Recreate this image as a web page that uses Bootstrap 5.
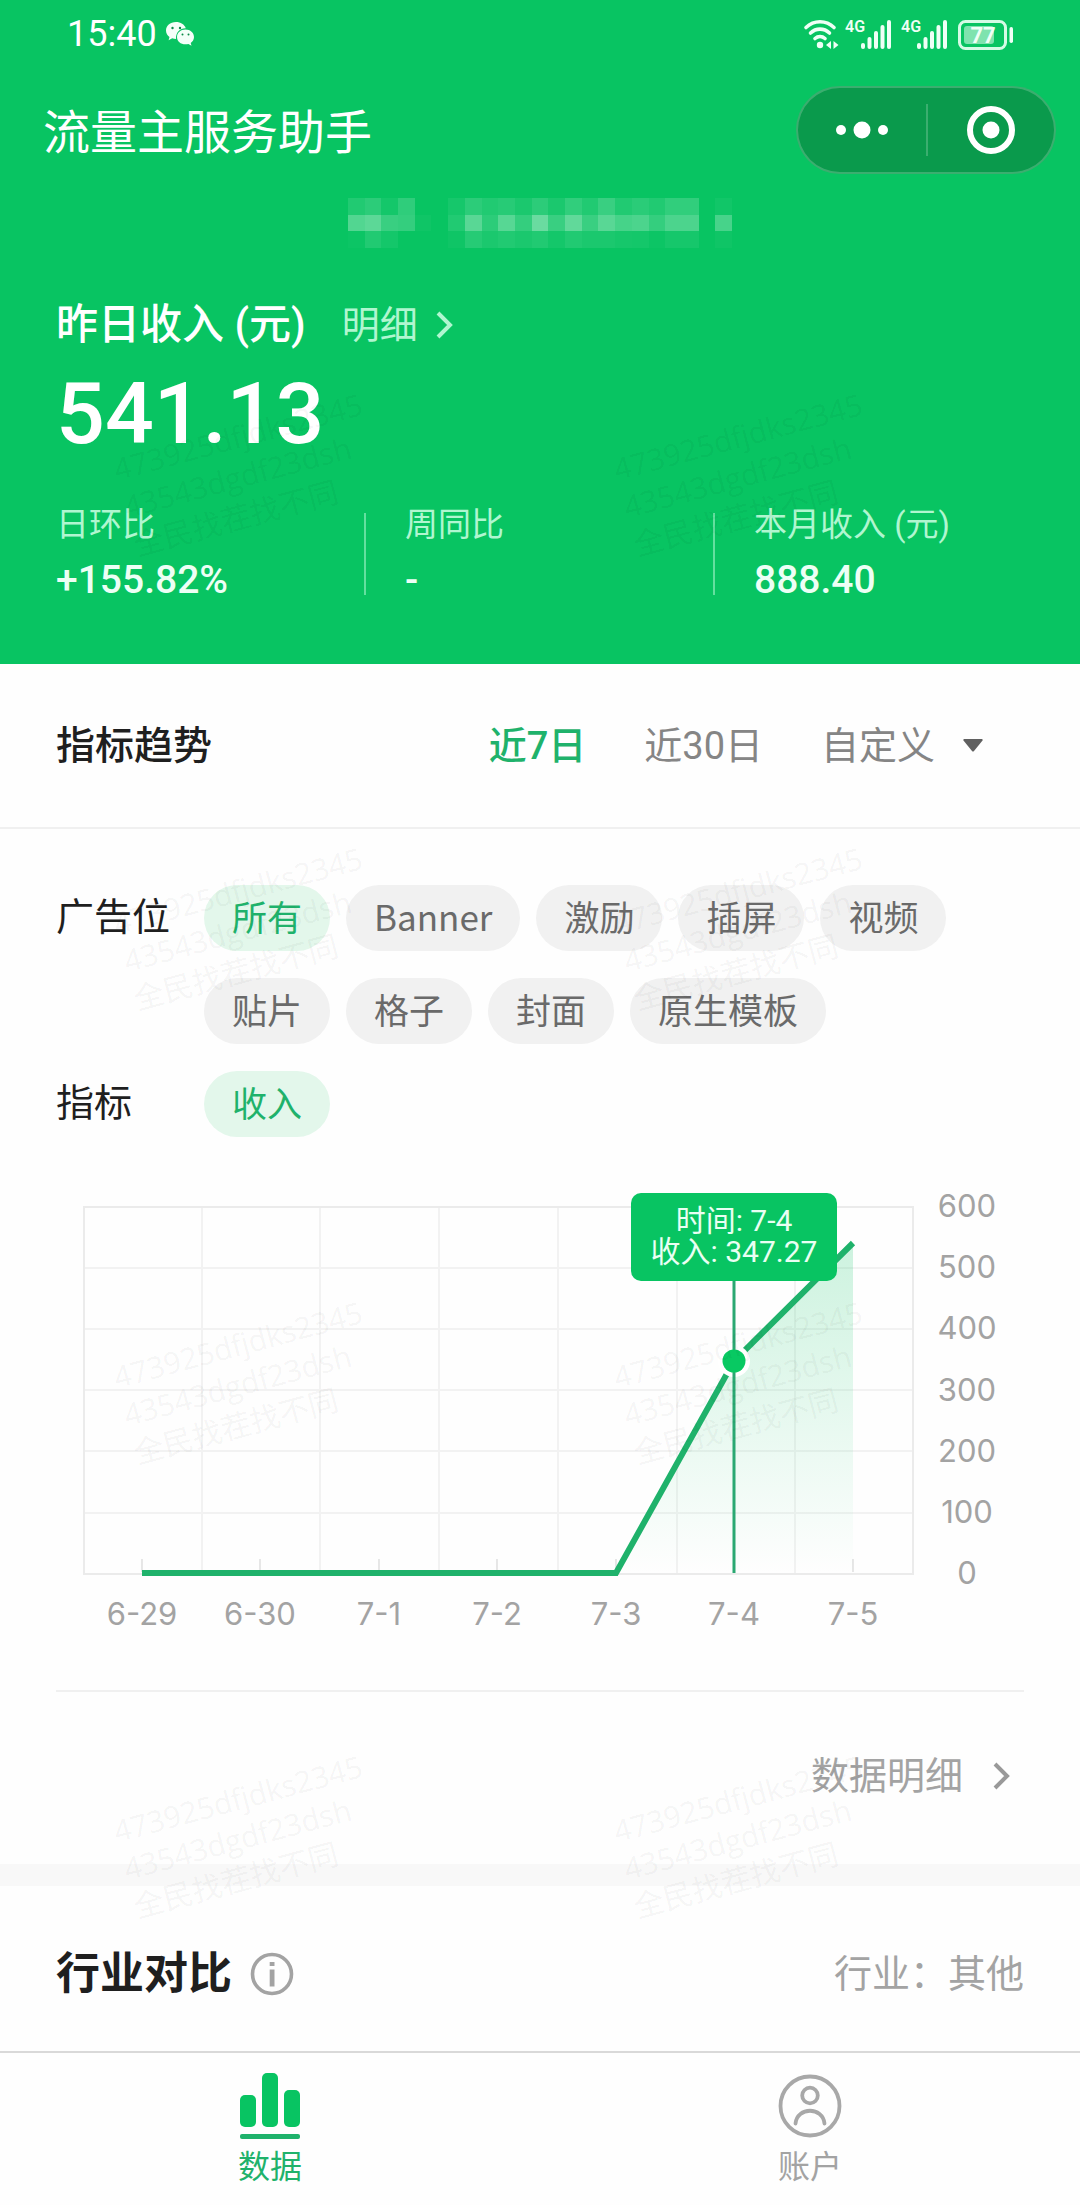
<!DOCTYPE html>
<html lang="zh-CN">
<head>
<meta charset="utf-8">
<meta name="viewport" content="width=device-width, initial-scale=1">
<title>流量主服务助手</title>
<link href="https://cdn.jsdelivr.net/npm/bootstrap@5.3.0/dist/css/bootstrap.min.css" rel="stylesheet">
<style>
:root { --brand: #08c462; --ink: #1f1f1f; --muted: #a3a3a3; --rule: #f0f0f0; }
body { font-family: Roboto, "Noto Sans CJK SC", sans-serif; background: #fefefe; color: var(--ink); overflow-x: hidden; }
a { text-decoration: none; color: inherit; }
svg { display: block; flex: none; }
.hero { background: var(--brand); color: #fff; padding-bottom: 61px; }
.status-bar { height: 68px; padding: 0 67px; font-size: 36px; line-height: 40px; }
.title-bar { height: 124px; padding: 0 24px 0 43px; }
.app-title { font-size: 47px; line-height: 60px; font-weight: 400; padding-top: 5px; }
.capsule { width: 260px; height: 88px; background: #0a9a4c; border: 2px solid rgba(255,255,255,.2); border-radius: 44px; }
.capsule button { background: none; border: 0; padding: 0; color: #fff; }
.capsule .split { width: 2px; height: 52px; background: rgba(255,255,255,.2); }
.mosaic { margin: 6px auto 0; }
.summary { padding: 49px 56px 0; }
.sum-label { font-size: 42px; line-height: 56px; font-weight: 500; }
.sum-link { font-size: 38px; line-height: 56px; color: #b0f6d0; margin-left: 36px; }
.sum-value { font-size: 86px; line-height: 90px; font-weight: 500; margin-top: 16px; }
.stats { margin-top: 46px; }
.stat-label { font-size: 33px; line-height: 40px; color: #b0f6d0; }
.stat-value { font-size: 39px; line-height: 46px; margin-top: 12px; font-weight: 500; color: #edfff5; }
.stat-a, .stat-b { flex: 308 0 0; } .stat-c { flex: 270 0 0; }
.stat-rule { width: 2px; height: 82px; background: #63e09f; margin-right: 39px; }
.trend-bar { height: 165px; padding: 0 97px 0 56px; border-bottom: 2px solid var(--rule); }
.trend-title { font-size: 39px; line-height: 56px; font-weight: 500; }
.ranges { gap: 58px; }
.range-btn { border: 0; background: none; padding: 0; font-size: 38px; line-height: 56px; color: #858585; }
.range-btn.active { color: #1fb26b; font-weight: 500; }
.range-select { appearance: none; }
.range-pick { gap: 27px; }
.filters { padding: 56px 56px 0; }
.filter-label { width: 148px; font-size: 38px; line-height: 64px; flex: none; }
.chips { gap: 27px 16px; }
.chip { border: 0; border-radius: 33px; height: 66px; padding: 0 28px 5px; font: 400 35px/60px "Noto Sans CJK SC", sans-serif; background: #f1f1f1; color: #6a6a6a; }
.chip.active { background: #e3f7eb; color: #1fb26b; }
.filter-row + .filter-row { margin-top: 27px; }
.chart { width: 100%; height: auto; }
.chart .axis { font: 31px Inter, sans-serif; fill: var(--muted); text-anchor: middle; }
.chart .tip { font: 30px Roboto, "Noto Sans CJK SC", sans-serif; fill: #e9fff3; text-anchor: middle; }
.detail-row { margin: 0 56px; border-top: 2px solid var(--rule); height: 174px; padding: 0 13px 4px 0; color: var(--muted); font-size: 38px; line-height: 56px; }
.detail-link { gap: 28px; }
.band { height: 22px; background: #f8f8f8; }
.industry { height: 165px; padding: 10px 56px 0; }
.industry-name { gap: 18px; }
.industry-title { font-size: 44px; line-height: 60px; font-weight: 700; }
.industry-value { font-size: 38px; line-height: 56px; color: var(--muted); }
.tabs { border-top: 2px solid #d9d9d9; padding: 20px 0 17px; }
.tab-link { flex: 1; font-size: 32px; line-height: 40px; color: var(--muted); gap: 8px; }
.tab-link.active { color: #1fb26b; }
.watermark { position: absolute; inset: 0; padding: 450px 0 0 114px; overflow: hidden; pointer-events: none; display: grid; grid-template-columns: repeat(2, 500px); grid-auto-rows: 454px; font: 30px/39px "Open Sans", "Noto Sans CJK SC", sans-serif; color: rgba(0,0,0,.05); }
.watermark div { transform: rotate(-15deg); transform-origin: 0 19px; white-space: nowrap; height: 117px; }
</style>
<script src="https://cdn.jsdelivr.net/npm/bootstrap@5.3.0/dist/js/bootstrap.bundle.min.js"></script>
</head>
<body>
<div class="position-relative">
<header class="hero">
  <div class="status-bar d-flex align-items-center justify-content-between">
    <div class="d-flex align-items-center gap-2">
      <span>15:40</span>
      <svg width="30" height="26" viewBox="0 0 30 26" fill="#f4fff9"><path d="M11 1C5 1 1 4.800 1 9.500c0 2.700 1.400 5 3.500 6.500l-.9 3.200 3.600-1.900c1.300.4 2.500.6 3.800.6C10.500 11.500 15 7 20.800 7.200 19.500 3.500 15.600 1 11 1z"/><path d="M20.500 8.500c-4.900 0-8.500 3.300-8.500 7.400 0 4.200 3.600 7.400 8.500 7.400 1 0 2-.2 2.900-.4l3.100 1.800-.8-2.700c2-1.500 3.300-3.600 3.300-6.100 0-4.100-3.600-7.400-8.500-7.400z"/><g fill="#0a8a48"><circle cx="7.500" cy="7" r="1.200"/><circle cx="15" cy="7" r="1.200"/><circle cx="17.500" cy="13.500" r="1"/><circle cx="23.500" cy="13.500" r="1"/></g></svg>
    </div>
    <svg width="210" height="32" viewBox="0 0 210 32" fill="#effff6">
      <g fill="none" stroke="#effff6" stroke-width="3.600" stroke-linecap="round"><path d="M3 9.500C11 1.800 23 1.800 31 9.500M7.500 15c5.500-5.200 13.500-5.200 19 0M12 20.500c3-2.600 7-2.600 10 0"/></g>
      <circle cx="17" cy="27" r="3.200"/><path d="M28 23v8l-5-4zM30.500 23l5 4-5 4z"/>
      <text x="42" y="14" font-size="16" font-weight="600">4G</text>
      <g id="bars"><rect x="58" y="25" width="4" height="6" rx="2"/><rect x="64.500" y="19" width="4" height="12" rx="2"/><rect x="71" y="13" width="4" height="18" rx="2"/><rect x="77.500" y="7" width="4" height="24" rx="2"/><rect x="84" y="2" width="4" height="29" rx="2"/></g>
      <text x="98" y="14" font-size="16" font-weight="600">4G</text>
      <use href="#bars" x="56"/>
      <rect x="156.500" y="3.500" width="46" height="27" rx="6" fill="none" stroke="#d5fbe5" stroke-width="3"/>
      <rect x="161" y="8" width="30" height="18" rx="3" fill="#7fe3ae"/>
      <rect x="206.500" y="9" width="3.500" height="16" rx="1.700"/>
      <text x="180" y="25" font-size="22" font-weight="700" text-anchor="middle">77</text>
    </svg>
  </div>
  <div class="title-bar d-flex align-items-center justify-content-between">
    <h1 class="app-title m-0">流量主服务助手</h1>
    <div class="capsule d-flex align-items-center">
      <button type="button" class="flex-fill d-flex justify-content-center" aria-label="更多"><svg width="52" height="20" viewBox="0 0 52 20" fill="#fff"><circle cx="5" cy="10" r="5"/><circle cx="26" cy="10" r="8.500"/><circle cx="47" cy="10" r="5"/></svg></button>
      <span class="split"></span>
      <button type="button" class="flex-fill d-flex justify-content-center" aria-label="关闭"><svg width="50" height="50" viewBox="0 0 50 50"><circle cx="25" cy="25" r="21" fill="none" stroke="#fff" stroke-width="6"/><circle cx="25" cy="25" r="8.500" fill="#fff"/></svg></button>
    </div>
  </div>
  <svg id="mosaic" class="mosaic" width="384" height="50" viewBox="0 0 23 3" preserveAspectRatio="none" shape-rendering="crispEdges" fill="#fff"></svg>
  <section class="summary">
    <div class="d-flex align-items-center">
      <span class="sum-label">昨日收入 (元)</span>
      <a href="#" class="sum-link d-flex align-items-center">明细
        <svg class="ms-3" width="20" height="30" viewBox="0 0 20 30" fill="none" stroke="#b0f6d0" stroke-width="4"><path d="M4 3l12 12L4 27"/></svg></a>
    </div>
    <div class="sum-value">541.13</div>
    <div class="stats d-flex align-items-center">
      <div class="stat-a"><div class="stat-label">日环比</div><div class="stat-value">+155.82%</div></div>
      <span class="stat-rule"></span>
      <div class="stat-b"><div class="stat-label">周同比</div><div class="stat-value">-</div></div>
      <span class="stat-rule"></span>
      <div class="stat-c"><div class="stat-label">本月收入 (元)</div><div class="stat-value">888.40</div></div>
    </div>
  </section>
</header>
<main>
  <div class="trend-bar d-flex align-items-center">
    <h2 class="trend-title m-0 me-auto">指标趋势</h2>
    <div class="ranges d-flex align-items-center">
      <button type="button" class="range-btn active">近7日</button>
      <button type="button" class="range-btn">近30日</button>
      <div class="range-pick d-flex align-items-center">
        <select class="range-btn range-select" aria-label="时间范围"><option>自定义</option></select>
        <svg width="20" height="13" viewBox="0 0 20 13" fill="#606060"><path d="M1 0h18q1 0 .5 1.500L11 12q-1 1-2 0L.5 1.500Q0 0 1 0z"/></svg>
      </div>
    </div>
  </div>
  <section class="filters">
    <div class="filter-row d-flex">
      <div class="filter-label">广告位</div>
      <div class="chips d-flex flex-wrap">
        <button type="button" class="chip active">所有</button><button type="button" class="chip">Banner</button><button type="button" class="chip">激励</button><button type="button" class="chip">插屏</button><button type="button" class="chip">视频</button><button type="button" class="chip">贴片</button><button type="button" class="chip">格子</button><button type="button" class="chip">封面</button><button type="button" class="chip">原生模板</button>
      </div>
    </div>
    <div class="filter-row d-flex">
      <div class="filter-label">指标</div>
      <div class="chips d-flex flex-wrap"><button type="button" class="chip active">收入</button></div>
    </div>
  </section>
  <svg class="chart" viewBox="0 0 1080 553" role="img" aria-label="收入趋势">
    <defs><linearGradient id="area" gradientUnits="userSpaceOnUse" x1="0" y1="106" x2="0" y2="437"><stop offset="0" stop-color="#08c462" stop-opacity=".2"/><stop offset="1" stop-color="#08c462" stop-opacity="0"/></linearGradient></defs>
    <g stroke="#f2f2f2" stroke-width="2"><path d="M84 131H913M84 192H913M84 253H913M84 314H913M84 376H913M202 70V437M320 70V437M439 70V437M558 70V437M677 70V437M795 70V437"/></g>
    <rect x="84" y="70" width="829" height="367" fill="none" stroke="#ebebeb" stroke-width="2"/>
    <path d="M142 422v13M260 422v13M379 422v13M497 422v13M616 422v13M853 422v13" stroke="#cfcfcf" stroke-width="1"/>
    <path d="M616 437L734 224 853 106V437z" fill="url(#area)"/>
    <path d="M142 436H616L734 224 853 106" fill="none" stroke="#1fb26b" stroke-width="6"/>
    <circle cx="734" cy="224" r="16" fill="#fff"/>
    <path d="M734 144V436" stroke="#2aa872" stroke-width="3"/>
    <circle cx="734" cy="224" r="11.500" fill="#08c962"/>
    <rect x="631" y="56" width="206" height="88" rx="10" fill="#08c462"/>
    <text class="tip" x="734" y="94">时间: 7-4</text><text class="tip" x="734" y="125">收入: 347.27</text>
    <g class="axis">
      <text x="142" y="488">6-29</text><text x="260" y="488">6-30</text><text x="379" y="488">7-1</text><text x="497" y="488">7-2</text><text x="616" y="488">7-3</text><text x="734" y="488">7-4</text><text x="853" y="488">7-5</text>
      <text x="967" y="80">600</text><text x="967" y="141">500</text><text x="967" y="202">400</text><text x="967" y="264">300</text><text x="967" y="325">200</text><text x="967" y="386">100</text><text x="967" y="447">0</text>
    </g>
  </svg>
  <div class="detail-row d-flex align-items-center justify-content-end">
    <a href="#" class="detail-link d-flex align-items-center">数据明细
      <svg width="20" height="30" viewBox="0 0 20 30" fill="none" stroke="#999" stroke-width="4"><path d="M4 3l12 12L4 27"/></svg></a>
  </div>
  <div class="band"></div>
  <div class="industry d-flex align-items-center justify-content-between">
    <div class="industry-name d-flex align-items-center">
      <h2 class="industry-title m-0">行业对比</h2>
      <svg width="44" height="44" viewBox="0 0 44 44"><circle cx="22" cy="22" r="19.500" fill="none" stroke="#a3a3a3" stroke-width="3.600"/><path d="M19.700 10h4.800v4h-4.800zM19.700 17.500h4.800v17h-4.800z" fill="#a3a3a3"/></svg>
    </div>
    <span class="industry-value">行业：其他</span>
  </div>
</main>
<nav class="tabs d-flex">
  <a href="#" class="tab-link active d-flex flex-column align-items-center">
    <svg width="62" height="66" viewBox="0 0 62 66" fill="#08c462"><rect x="1" y="22" width="16" height="32" rx="5"/><rect x="23" y="0" width="16" height="54" rx="5"/><rect x="45" y="17" width="16" height="37" rx="5"/><rect x="1" y="61" width="60" height="5" rx="2" fill="#1fb26b"/></svg>数据</a>
  <a href="#" class="tab-link d-flex flex-column align-items-center">
    <svg width="66" height="66" viewBox="0 0 66 66" fill="none" stroke="#a8a8a8" stroke-width="3.800"><circle cx="33" cy="33" r="29.500"/><circle cx="33" cy="22.500" r="7.800"/><path d="M18.500 50.500C20 33.500 46 33.500 47.500 50.500" stroke-linecap="round"/></svg>账户</a>
</nav>
<div class="watermark" aria-hidden="true">
  <div>473925dfjdks2345<br>43543dgdf23dsh<br>全民找茬找不同</div><div>473925dfjdks2345<br>43543dgdf23dsh<br>全民找茬找不同</div>
  <div>473925dfjdks2345<br>43543dgdf23dsh<br>全民找茬找不同</div><div>473925dfjdks2345<br>43543dgdf23dsh<br>全民找茬找不同</div>
  <div>473925dfjdks2345<br>43543dgdf23dsh<br>全民找茬找不同</div><div>473925dfjdks2345<br>43543dgdf23dsh<br>全民找茬找不同</div>
  <div>473925dfjdks2345<br>43543dgdf23dsh<br>全民找茬找不同</div><div>473925dfjdks2345<br>43543dgdf23dsh<br>全民找茬找不同</div>
</div>
</div>
<script>
// Pixelated account name: opacity in percent for each cell, row by row
const cells = [
  [10,15,5,16,0,0,6,15,10,13,8,15,8,17,10,20,10,14,10,17,17,0,4],
  [30,34,20,18,3,0,10,33,15,32,18,40,20,36,20,33,25,28,18,28,28,0,26],
  [2,10,5,0,0,0,3,12,8,10,8,10,5,10,8,8,6,5,2,6,6,0,3]
];
document.getElementById('mosaic').innerHTML = cells.map((row, y) => row.map((o, x) =>
  o ? `<rect x="${x}" y="${y}" width="1" height="1" opacity="${o / 100}"/>` : '').join('')).join('');
</script>
</body>
</html>
